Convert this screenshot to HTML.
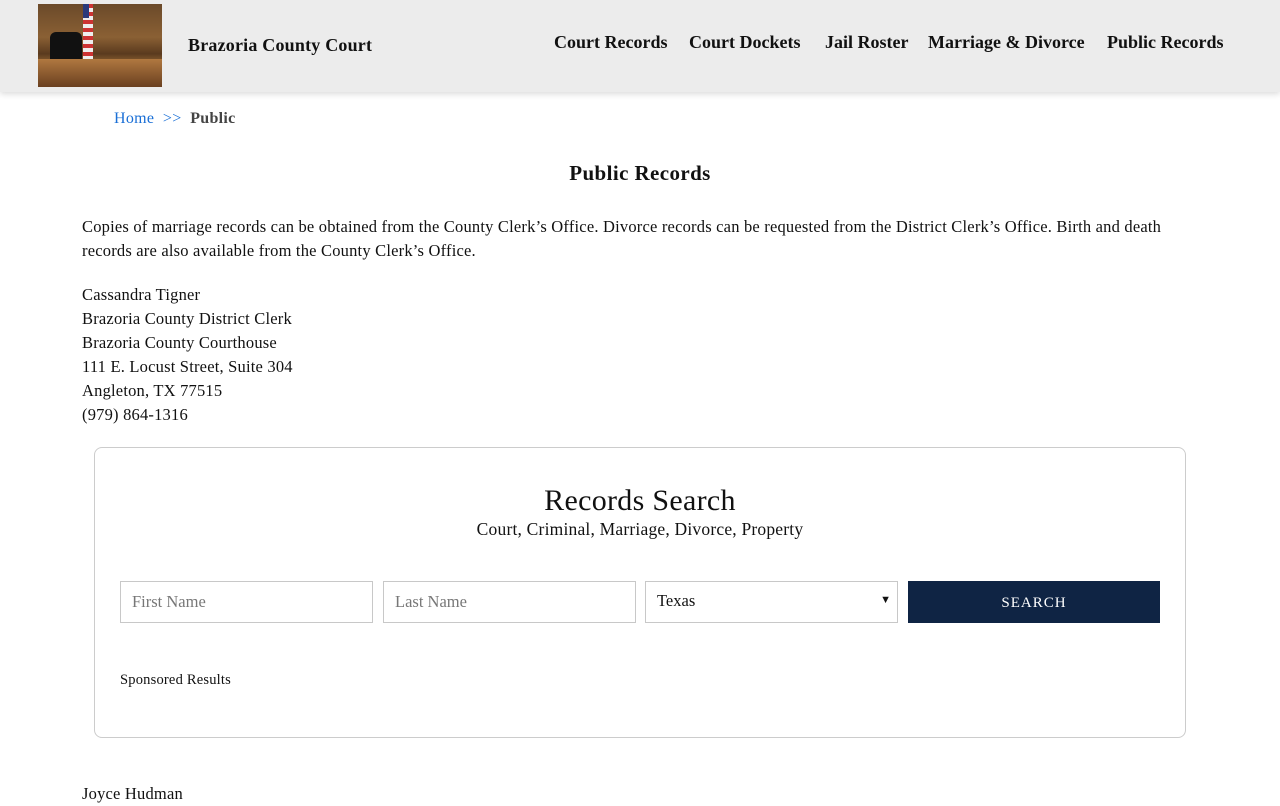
<!DOCTYPE html>
<html><head><meta charset="utf-8"><style>
*{margin:0;padding:0;box-sizing:border-box}
body{width:1280px;height:800px;overflow:hidden;background:#fff;font-family:"Liberation Serif",serif;color:#111}
.hdr{position:absolute;left:0;top:0;width:1280px;height:92px;background:#ececec;box-shadow:0 2px 6px rgba(0,0,0,.15)}
.logo{position:absolute;left:38px;top:4px;width:124px;height:83px;background:linear-gradient(180deg,#6b4a2a 0%,#8a6034 40%,#5a3a1e 60%,#a0703a 75%,#6a4320 100%)}
.logo .chair{position:absolute;left:12px;top:28px;width:32px;height:30px;background:#111;border-radius:6px 6px 2px 2px}
.logo .flag{position:absolute;left:45px;top:0;width:10px;height:55px;background:repeating-linear-gradient(180deg,#c33 0 4px,#eee 4px 8px)}
.logo .flag:before{content:"";position:absolute;left:0;top:0;width:6px;height:14px;background:#2a3a7a}
.logo .desk{position:absolute;left:0;top:55px;width:124px;height:28px;background:linear-gradient(180deg,#b07840,#6a4020)}
.title{position:absolute;left:188px;top:35px;font-size:18px;font-weight:bold;letter-spacing:.2px}
.nav{position:absolute;top:32px;font-size:18px;font-weight:bold}
.bc{position:absolute;left:114px;top:110px;font-size:16px;letter-spacing:.3px}
.bc a{color:#1a6fd6;text-decoration:none}
h1{position:absolute;left:0;width:1280px;top:161px;text-align:center;font-size:21px;letter-spacing:.4px}
.p{position:absolute;left:82px;font-size:16.5px;line-height:24px;letter-spacing:.2px}
.box{position:absolute;left:94px;top:447px;width:1092px;height:291px;border:1px solid #ccc;border-radius:8px}
.rs{position:absolute;left:0;width:100%;top:36px;text-align:center;font-size:30px;letter-spacing:.3px}
.sub{position:absolute;left:0;width:100%;top:71px;text-align:center;font-size:17.5px;letter-spacing:.2px}
.in{position:absolute;top:133px;width:253px;height:42px;border:1px solid #c8c8c8;font-size:16.5px;color:#777;padding:10px 11px}
.btn{position:absolute;top:133px;left:813px;width:252px;height:42px;background:#0f2444;color:#fff;text-align:center;line-height:44px;font-size:15px;letter-spacing:1px}
.sp{position:absolute;left:25px;top:224px;font-size:14.5px;letter-spacing:.2px}
</style></head><body>
<div class="hdr">
<div class="logo"><div class="flag"></div><div class="chair"></div><div class="desk"></div></div>
<div class="title">Brazoria County Court</div>
<div class="nav" style="left:554px">Court Records</div>
<div class="nav" style="left:689px">Court Dockets</div>
<div class="nav" style="left:825px">Jail Roster</div>
<div class="nav" style="left:928px">Marriage &amp; Divorce</div>
<div class="nav" style="left:1107px">Public Records</div>
</div>
<div class="bc"><a>Home</a>&nbsp;&nbsp;<a>&gt;&gt;</a>&nbsp;&nbsp;<b style="color:#444">Public</b></div>
<h1>Public Records</h1>
<div class="p" style="top:215px;width:1100px">Copies of marriage records can be obtained from the County Clerk’s Office. Divorce records can be requested from the District Clerk’s Office. Birth and death records are also available from the County Clerk’s Office.</div>
<div class="p" style="top:283px">Cassandra Tigner<br>Brazoria County District Clerk<br>Brazoria County Courthouse<br>111 E. Locust Street, Suite 304<br>Angleton, TX 77515<br>(979) 864-1316</div>
<div class="box">
<div class="rs">Records Search</div>
<div class="sub">Court, Criminal, Marriage, Divorce, Property</div>
<div class="in" style="left:25px">First Name</div>
<div class="in" style="left:288px">Last Name</div>
<div class="in" style="left:550px;color:#111;padding-top:9px">Texas<span style="position:absolute;right:6px;top:12px;font-size:11px">&#9660;</span></div>
<div class="btn">SEARCH</div>
<div class="sp">Sponsored Results</div>
</div>
<div class="p" style="top:782px">Joyce Hudman</div>
</body></html>
